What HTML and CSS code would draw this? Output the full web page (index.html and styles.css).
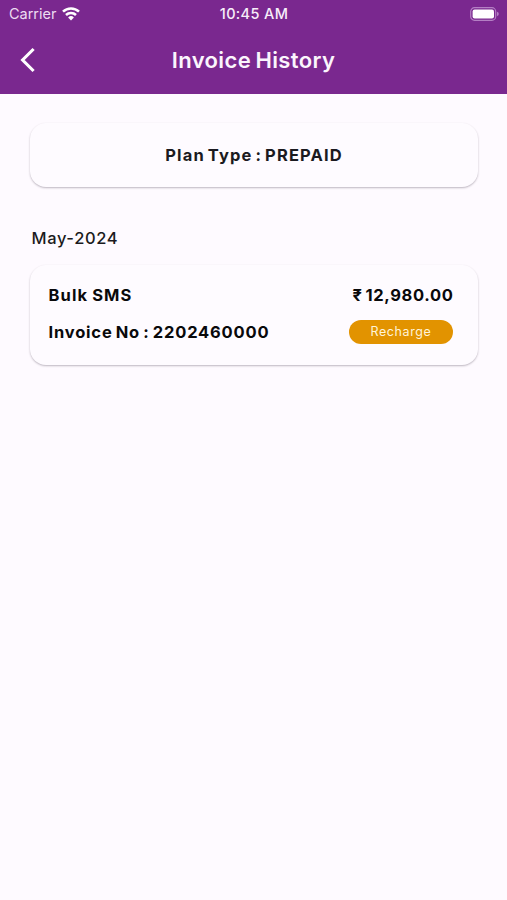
FILE: index.html
```html
<!DOCTYPE html>
<html lang="en">
<head>
<meta charset="utf-8">
<title>Invoice History</title>
<link rel="stylesheet" href="styles.css">
</head>
<body>
<header class="header">
  <div class="status">
    <div class="carrier"><span class="carrier-name">Carrier</span>
      <svg class="wifi" viewBox="0 0 18 14" fill="none" stroke="#fff" stroke-width="2.5"><path d="M1 4.7a11.4 11.4 0 0 1 16 0M4 8a7.1 7.1 0 0 1 10 0"/><path d="M9 13.4 6.1 10.5a4.1 4.1 0 0 1 5.8 0z" fill="#fff" stroke="none"/></svg>
    </div>
    <time class="clock">10:45 AM</time>
    <svg class="battery" viewBox="0 0 29 14"><rect x=".7" y=".7" width="25" height="12.6" rx="3.8" fill="none" stroke="#b47fc4" stroke-width="1.2"/><rect x="2.6" y="2.5" width="21.4" height="9" rx="2" fill="#fff"/><path d="M27 4.8q1.8.6 1.8 2.2T27 9.2z" fill="#b47fc4"/></svg>
  </div>
  <div class="titlebar">
    <svg class="back" viewBox="0 0 16 26" fill="none" stroke="#fff" stroke-width="3.1"><path d="M13.6 2 2.6 13l11 11"/></svg>
    <h1 class="title">Invoice History</h1>
  </div>
</header>
<main class="content">
  <section class="card plan"><span class="plan-text">Plan Type : PREPAID</span></section>
  <h2 class="month"><span class="month-text">May-2024</span></h2>
  <section class="card invoice">
    <div class="row"><span class="service">Bulk SMS</span><span class="amount"><span class="rupee">₹</span><span class="figure">12,980.00</span></span></div>
    <div class="row"><span class="number">Invoice No : 2202460000</span><button class="recharge"><span class="recharge-text">Recharge</span></button></div>
  </section>
</main>
</body>
</html>
```
FILE: styles.css
```css
* { box-sizing: border-box; }
body {
  margin: 0;
  min-height: 900px;
  background: #fefaff;
  color: #1b1a20;
  font-family: Inter, "Liberation Sans", sans-serif;
  font-weight: 600;
}
.header { height: 94px; background: #7a288f; color: #fff; }
.status {
  display: grid;
  grid-template-columns: 1fr auto 1fr;
  align-items: center;
  height: 27px;
  padding: 0 8px 0 9px;
}
.carrier { display: flex; align-items: center; gap: 6px; color: #eddcf2; font-size: 14.5px; font-weight: 400; }
.carrier-name { letter-spacing: -.03px; }
.wifi { width: 18px; height: 14px; }
.clock { font-size: 14.5px; font-weight: 500; letter-spacing: .35px; color: #f7eefa; }
.battery { width: 29px; height: 14px; justify-self: end; }
.titlebar {
  display: grid;
  grid-template-columns: 16px 1fr 16px;
  align-items: center;
  height: 66px;
  padding: 0 20px;
}
.back { width: 16px; height: 26px; }
.title { margin: 0; text-align: center; font-size: 22px; font-weight: 630; letter-spacing: .37px; word-spacing: -1.5px; color: #fbf5fd; }
.content { padding: 29px 29px 0 30px; }
.card {
  border-radius: 16px;
  background: #fefbff;
  box-shadow: 0 1px 2px rgba(40, 25, 45, .3);
}
.plan { display: flex; align-items: center; justify-content: center; height: 64px; font-size: 16.5px; font-weight: 650; letter-spacing: 1.12px; word-spacing: -2px; }
.month { margin: 40px 0 16px; padding-left: 1.5px; font-size: 16.5px; line-height: 22px; font-weight: 550; letter-spacing: .62px; }
.invoice { height: 100px; padding: 18.4px 25px 0 18.5px; color: #09090b; font-size: 16.5px; font-weight: 650; }
.row { display: flex; justify-content: space-between; align-items: center; height: 24px; }
.row + .row { margin-top: 12.6px; }
.service { letter-spacing: 1.1px; word-spacing: -1px; }
.number { letter-spacing: .81px; word-spacing: -1.5px; }
.amount { display: flex; gap: 2px; margin-right: -.6px; }
.figure { letter-spacing: .66px; }
.rupee { width: 11px; }
.recharge {
  width: 104px;
  height: 24px;
  padding: 0;
  border: 0;
  border-radius: 12px;
  background: #e29300;
  color: #fff4d9;
  font: 400 12.5px/22px Inter, sans-serif;
  letter-spacing: .6px;
}
```
